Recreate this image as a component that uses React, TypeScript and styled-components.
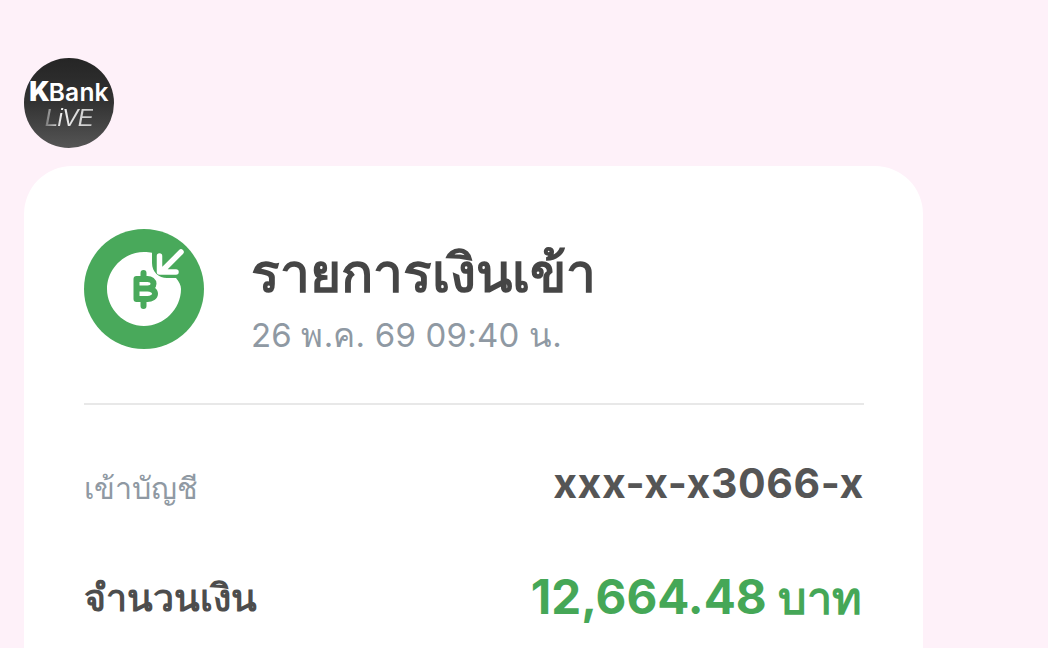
import styled, { createGlobalStyle } from "styled-components";

const GlobalStyle = createGlobalStyle`
  html, body {
    margin: 0;
    padding: 0;
    height: 100%;
    overflow: hidden;
    background: #fef1f9;
  }
  * {
    box-sizing: border-box;
  }
`;

const FONT = `Inter, "Liberation Sans", sans-serif`;

const Page = styled.div`
  width: 1048px;
  height: 648px;
  padding: 58px 125px 0 24px;
  overflow: hidden;
  font-family: ${FONT};
`;

const Badge = styled.div`
  width: 90px;
  height: 90px;
  border-radius: 50%;
  background: linear-gradient(180deg, #252525 0%, #333 50%, #555 100%);
  display: flex;
  flex-direction: column;
  align-items: center;
  justify-content: center;
  gap: 2px;
  padding-top: 2px;
`;

const BadgeName = styled.div`
  font-size: 24.5px;
  line-height: 25px;
  font-weight: 600;
  color: #fff;
  letter-spacing: 0.2px;

  b {
    font-size: 27px;
    line-height: 25px;
    font-weight: 900;
    letter-spacing: -1px;
  }
`;

const BadgeLive = styled.div`
  font-family: "Liberation Sans", sans-serif;
  font-style: italic;
  font-size: 24px;
  line-height: 22px;
  background: linear-gradient(90deg, #777 0%, #f0f0f0 35%, #c4c4c4 100%);
  -webkit-background-clip: text;
  background-clip: text;
  color: transparent;
  letter-spacing: -0.5px;
`;

const Card = styled.div`
  margin-top: 18px;
  height: 700px;
  background: #fff;
  border-radius: 48px;
  padding: 63px 59px 0 60px;
`;

const Header = styled.div`
  display: flex;
  align-items: flex-start;
  gap: 47px;
  height: 176px;
  border-bottom: 2px solid #e8e8e8;
`;

const HeaderText = styled.div`
  display: flex;
  flex-direction: column;
  gap: 9px;
  padding-top: 10px;
`;

const Title = styled.div`
  font-size: 53.3px;
  line-height: 68px;
  font-weight: 700;
  color: #454545;
`;

const DateLine = styled.div`
  font-size: 33px;
  line-height: 38px;
  letter-spacing: 0.2px;
  color: #8f99a3;
`;

const Row = styled.div<{ $top: number }>`
  display: flex;
  justify-content: space-between;
  align-items: flex-start;
  margin-top: ${(p) => p.$top}px;
`;

const Label = styled.div<{ $strong?: boolean }>`
  padding-top: 7px;
  font-size: ${(p) => (p.$strong ? 37.5 : 30.5)}px;
  line-height: 44px;
  font-weight: ${(p) => (p.$strong ? 700 : 400)};
  color: ${(p) => (p.$strong ? "#4d4d4d" : "#8f99a3")};
`;

const Account = styled.div`
  font-size: 41px;
  line-height: 48px;
  font-weight: 700;
  letter-spacing: 0.6px;
  color: #555;
`;

const Amount = styled.div`
  font-size: 47.5px;
  line-height: 56px;
  font-weight: 700;
  color: #45a757;
  padding-right: 2px;

  span {
    font-size: 45px;
    font-weight: 600;
  }
`;

const IncomeIcon = () => (
  <svg width="120" height="120" viewBox="0 0 120 120" style={{ flex: "none" }}>
    <circle cx="60" cy="60" r="60" fill="#49a95b" />
    <path
      d="M60 23c3 0 6 .3 8 .8V34c0 9 7 15 15 15h9c3 4 5 7 5 11 0 20-17 37-37 37S23 80 23 60s17-37 37-37z"
      fill="#fff"
    />
    <path
      d="M97 23 78 42M75.500 27v16h16.500"
      fill="none"
      stroke="#fff"
      strokeWidth="5.500"
      strokeLinecap="round"
      strokeLinejoin="round"
    />
    <path
      d="M52.500 50h11c3.500 0 6 2 6 4.800s-2.500 4.700-6 4.700h-11M63.500 59.500c4 0 7.500 2.200 7.500 5.200s-3.500 5.300-7.500 5.300h-11V50M59.500 44v6M59.500 70v7"
      fill="none"
      stroke="#49a95b"
      strokeWidth="6"
      strokeLinecap="round"
      strokeLinejoin="round"
    />
  </svg>
);

export default function App() {
  return (
    <Page>
      <GlobalStyle />
      <Badge>
        <BadgeName>
          <b>K</b>Bank
        </BadgeName>
        <BadgeLive>LiVE</BadgeLive>
      </Badge>
      <Card>
        <Header>
          <IncomeIcon />
          <HeaderText>
            <Title>รายการเงินเข้า</Title>
            <DateLine>26 พ.ค. 69 09:40 น.</DateLine>
          </HeaderText>
        </Header>
        <Row $top={54}>
          <Label>เข้าบัญชี</Label>
          <Account>xxx-x-x3066-x</Account>
        </Row>
        <Row $top={59}>
          <Label $strong>จำนวนเงิน</Label>
          <Amount>
            12,664.48 <span>บาท</span>
          </Amount>
        </Row>
      </Card>
    </Page>
  );
}
